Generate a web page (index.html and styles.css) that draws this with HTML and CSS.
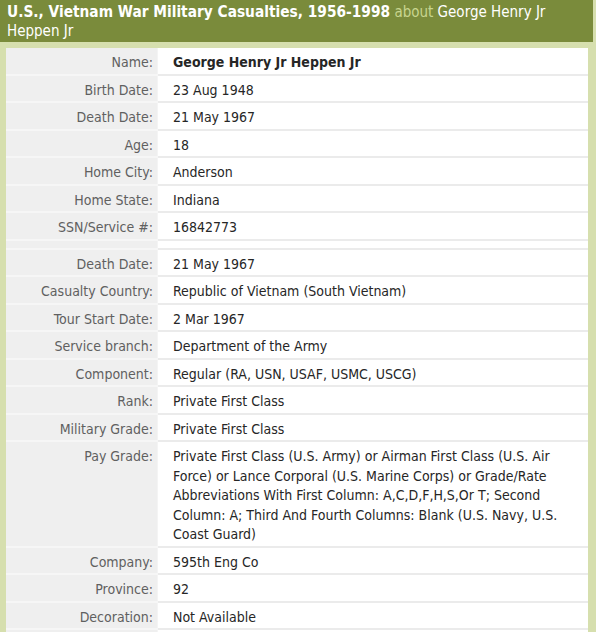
FILE: index.html
```html
<!DOCTYPE html>
<html>
<head>
<meta charset="utf-8">
<link rel="stylesheet" href="styles.css">
</head>
<body>
<div class="page">
  <h1 class="header"><span class="coll">U.S., Vietnam War Military Casualties, 1956-1998</span> <span class="about">about</span> <span class="person">George Henry Jr Heppen Jr</span></h1>
  <div class="wrap">
    <table class="rec">
      <tr><th>Name:</th><td class="name">George Henry Jr Heppen Jr</td></tr>
      <tr><th>Birth Date:</th><td>23 Aug 1948</td></tr>
      <tr><th>Death Date:</th><td>21 May 1967</td></tr>
      <tr><th>Age:</th><td>18</td></tr>
      <tr><th>Home City:</th><td>Anderson</td></tr>
      <tr><th>Home State:</th><td>Indiana</td></tr>
      <tr><th>SSN/Service #:</th><td>16842773</td></tr>
      <tr class="spacer"><th></th><td></td></tr>
      <tr><th>Death Date:</th><td>21 May 1967</td></tr>
      <tr><th>Casualty Country:</th><td>Republic of Vietnam (South Vietnam)</td></tr>
      <tr><th>Tour Start Date:</th><td>2 Mar 1967</td></tr>
      <tr><th>Service branch:</th><td>Department of the Army</td></tr>
      <tr><th>Component:</th><td>Regular (RA, USN, USAF, USMC, USCG)</td></tr>
      <tr><th>Rank:</th><td>Private First Class</td></tr>
      <tr><th>Military Grade:</th><td>Private First Class</td></tr>
      <tr><th>Pay Grade:</th><td>Private First Class (U.S. Army) or Airman First Class (U.S. Air Force) or Lance Corporal (U.S. Marine Corps) or Grade/Rate Abbreviations With First Column: A,C,D,F,H,S,Or T; Second Column: A; Third And Fourth Columns: Blank (U.S. Navy, U.S. Coast Guard)</td></tr>
      <tr><th>Company:</th><td>595th Eng Co</td></tr>
      <tr><th>Province:</th><td>92</td></tr>
      <tr><th>Decoration:</th><td>Not Available</td></tr>
      <tr><th>&nbsp;</th><td>&nbsp;</td></tr>
    </table>
  </div>
</div>
</body>
</html>
```
FILE: styles.css
```css
html, body {
  margin: 0;
  padding: 0;
}
body {
  background: #d6dfae;
  font-family: "DejaVu Sans Condensed", "DejaVu Sans", sans-serif;
  font-size: 14px;
  height: 632px;
  overflow: hidden;
}
.page {
  width: 593px;
}
.header {
  margin: 0;
  background: #7a8b3b;
  color: #ffffff;
  font-size: 15px;
  font-weight: normal;
  line-height: 19px;
  padding: 3px 7px 1px 7px;
  height: 38px;
}
.coll {
  font-weight: bold;
  font-size: 15.3px;
}
.about {
  color: #c8d58f;
}
.wrap {
  background: #d6dfae;
  padding: 6px 5px 0 6px;
}
.rec {
  width: 100%;
  border-collapse: collapse;
  border-spacing: 0;
}
.rec th,
.rec td {
  padding: 5px 0 1px 0;
  line-height: 19.5px;
  vertical-align: top;
  font-size: 14px;
}
.rec th {
  width: 147px;
  padding-right: 4px;
  text-align: right;
  font-weight: normal;
  color: #606060;
  background: #efefef;
  border-bottom: 2px solid #f6f6f6;
  border-right: 1px solid #f4f4f4;
}
.rec td {
  padding-left: 15px;
  padding-right: 8px;
  color: #262626;
  background: #ffffff;
  border-bottom: 2px solid #ebebeb;
}
.rec td.name {
  font-weight: bold;
}
.rec tr.spacer th,
.rec tr.spacer td {
  padding: 0;
  height: 7px;
  line-height: 0;
}
```
